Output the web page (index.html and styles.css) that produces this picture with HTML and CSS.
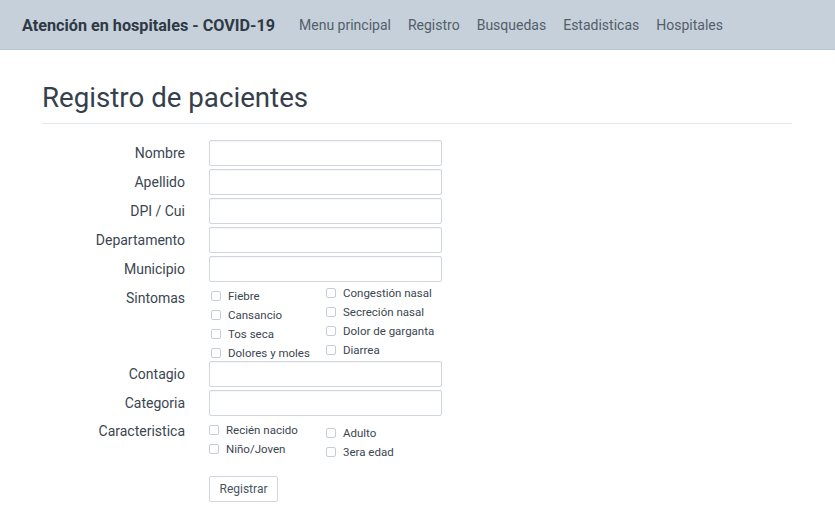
FILE: index.html
```html
<!DOCTYPE html>
<html lang="es">
<head>
<meta charset="utf-8">
<title>Registro de pacientes</title>
<link rel="stylesheet" href="styles.css">
</head>
<body>
<nav class="navbar">
  <div class="nav-inner">
    <span class="brand">Atención en hospitales - COVID-19</span>
    <ul class="links">
      <li>Menu principal</li>
      <li>Registro</li>
      <li>Busquedas</li>
      <li>Estadisticas</li>
      <li>Hospitales</li>
    </ul>
  </div>
</nav>
<main class="container">
  <h1 class="page-title">Registro de pacientes</h1>
  <form class="form">
    <label class="lbl">Nombre</label><input class="field" type="text">
    <label class="lbl">Apellido</label><input class="field" type="text">
    <label class="lbl">DPI / Cui</label><input class="field" type="text">
    <label class="lbl">Departamento</label><input class="field" type="text">
    <label class="lbl">Municipio</label><input class="field" type="text">
    <label class="lbl lbl-top">Sintomas</label>
    <div class="checks sintomas">
      <div class="col col-a">
        <label class="chk"><span class="box"></span>Fiebre</label>
        <label class="chk"><span class="box"></span>Cansancio</label>
        <label class="chk"><span class="box"></span>Tos seca</label>
        <label class="chk"><span class="box"></span>Dolores y moles</label>
      </div>
      <div class="col col-b">
        <label class="chk"><span class="box"></span>Congestión nasal</label>
        <label class="chk"><span class="box"></span>Secreción nasal</label>
        <label class="chk"><span class="box"></span>Dolor de garganta</label>
        <label class="chk"><span class="box"></span>Diarrea</label>
      </div>
    </div>
    <label class="lbl">Contagio</label><input class="field" type="text">
    <label class="lbl">Categoria</label><input class="field" type="text">
    <label class="lbl lbl-top2">Caracteristica</label>
    <div class="checks caract">
      <div class="col col-c">
        <label class="chk"><span class="box"></span>Recién nacido</label>
        <label class="chk"><span class="box"></span>Niño/Joven</label>
      </div>
      <div class="col col-d">
        <label class="chk"><span class="box"></span>Adulto</label>
        <label class="chk"><span class="box"></span>3era edad</label>
      </div>
    </div>
    <span></span>
    <div class="actions"><button type="button" class="btn">Registrar</button></div>
  </form>
</main>
</body>
</html>
```

FILE: styles.css
```css
html, body {
  margin: 0;
  padding: 0;
  background: #ffffff;
}
body {
  font-family: Roboto, "Liberation Sans", sans-serif;
  color: #3b4651;
}
.navbar {
  background: #c5d0da;
  border-bottom: 1px solid #b8c4cf;
  height: 49px;
}
.nav-inner {
  display: flex;
  align-items: center;
  height: 49px;
  padding-left: 22px;
  padding-top: 1px;
  box-sizing: border-box;
}
.brand {
  font-weight: 700;
  font-size: 16.2px;
  color: #2e3944;
}
.links {
  display: flex;
  list-style: none;
  margin: 0 0 0 24px;
  padding: 0;
  gap: 17px;
  font-size: 14px;
  color: #535e69;
}
.container {
  width: 750px;
  margin: 0 0 0 42px;
}
.page-title {
  font-weight: 400;
  font-size: 27.7px;
  color: #34404b;
  margin: 0;
  padding: 33px 0 10px 0;
  border-bottom: 1px solid #e3e8ec;
  line-height: 30px;
}
.form {
  display: grid;
  grid-template-columns: 143px 233px;
  column-gap: 24px;
  row-gap: 3px;
  margin-top: 16px;
  align-items: center;
}
.lbl {
  text-align: right;
  font-size: 14px;
  color: #3b4651;
}
.lbl-top {
  align-self: start;
  padding-top: 5px;
}
.lbl-top2 {
  align-self: start;
  padding-top: 4px;
}
.field {
  box-sizing: border-box;
  width: 233px;
  height: 26px;
  border: 1px solid #cfd6dd;
  border-radius: 2px;
  box-shadow: inset 0 1px 1px rgba(0,0,0,0.04);
  margin: 0;
  padding: 0 6px;
  font: inherit;
}
.checks {
  display: flex;
}
.col {
  display: flex;
  flex-direction: column;
}
.sintomas {
  margin-top: -2px;
  margin-bottom: -4px;
}
.col-a {
  width: 115px;
  padding-left: 2px;
  padding-top: 3px;
}
.col-b {
  padding-top: 0;
}
.chk {
  display: flex;
  align-items: center;
  height: 19px;
  font-size: 11.5px;
  color: #3b4651;
  white-space: nowrap;
}
.box {
  box-sizing: border-box;
  width: 10px;
  height: 10px;
  border: 1px solid #c6cdd4;
  border-radius: 2px;
  margin-right: 7px;
  background: #fff;
}
.caract {
  padding-top: 1px;
}
.col-c {
  width: 117px;
  padding-top: 0;
}
.col-d {
  padding-top: 3px;
}
.actions {
  padding-top: 12px;
}
.btn {
  box-sizing: border-box;
  height: 26px;
  width: 69px;
  border: 1px solid #cfd6dd;
  border-radius: 2px;
  background: #fff;
  color: #4a555f;
  font-family: inherit;
  font-size: 12px;
  padding: 0;
}
```
